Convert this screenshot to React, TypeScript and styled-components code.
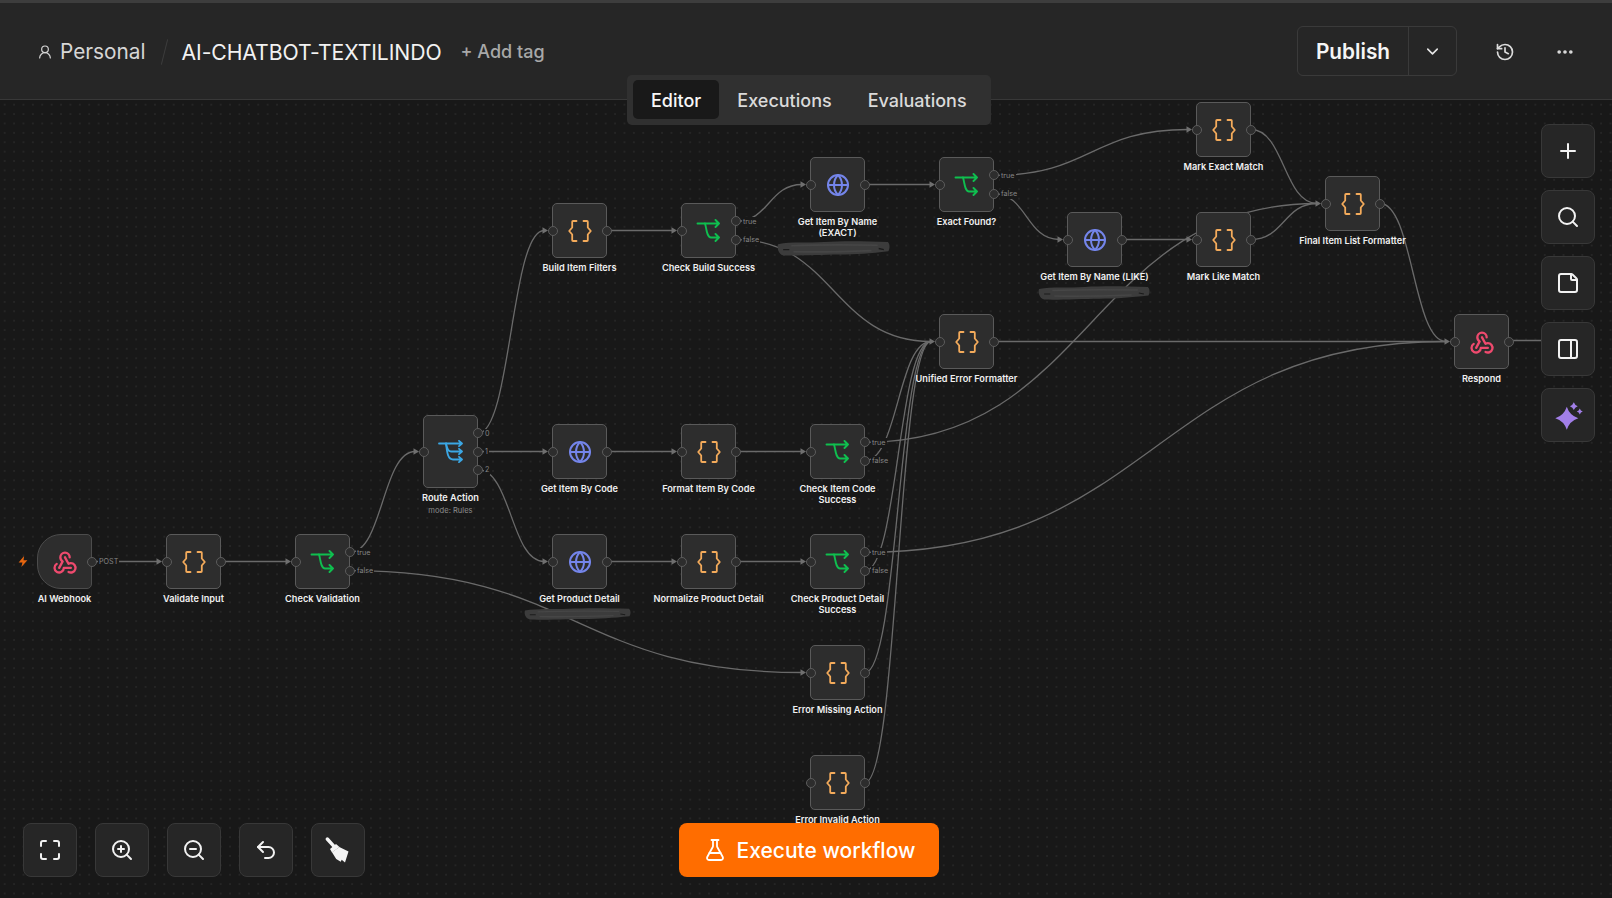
import styled, { createGlobalStyle } from 'styled-components';
import {
  ChevronDown,
  Ellipsis,
  FlaskConical,
  Globe,
  History,
  Maximize,
  PanelRight,
  Plus,
  Search,
  StickyNote,
  Undo2,
  UserRound,
  ZoomIn,
  ZoomOut,
} from 'lucide-react';
import { TbWebhook } from 'react-icons/tb';

// canvas starts under the header, node coordinates below are page coordinates
const CANVAS_TOP = 100;
const NODE_SIZE = 55;

type NodeKind = 'webhook' | 'code' | 'http' | 'if' | 'switch';

interface FlowNode {
  id: string;
  label: string[];
  sub?: string;
  x: number;
  y: number;
  h?: number;
  kind: NodeKind;
  outs?: string[];
  noInput?: boolean;
  trigger?: boolean;
}

interface FlowEdge {
  from: string;
  out?: number;
  to: string;
}

const nodes: FlowNode[] = [
  { id: 'hook', label: ['AI Webhook'], x: 37, y: 534, kind: 'webhook', outs: ['POST'], noInput: true, trigger: true },
  { id: 'validate', label: ['Validate Input'], x: 166, y: 534, kind: 'code' },
  { id: 'checkVal', label: ['Check Validation'], x: 295, y: 534, kind: 'if', outs: ['true', 'false'] },
  { id: 'route', label: ['Route Action'], sub: 'mode: Rules', x: 423, y: 415, h: 73, kind: 'switch', outs: ['0', '1', '2'] },
  { id: 'build', label: ['Build Item Filters'], x: 552, y: 203, kind: 'code' },
  { id: 'checkBuild', label: ['Check Build Success'], x: 681, y: 203, kind: 'if', outs: ['true', 'false'] },
  { id: 'exact', label: ['Get Item By Name', '(EXACT)'], x: 810, y: 157, kind: 'http' },
  { id: 'found', label: ['Exact Found?'], x: 939, y: 157, kind: 'if', outs: ['true', 'false'] },
  { id: 'like', label: ['Get Item By Name (LIKE)'], x: 1067, y: 212, kind: 'http' },
  { id: 'markExact', label: ['Mark Exact Match'], x: 1196, y: 102, kind: 'code' },
  { id: 'markLike', label: ['Mark Like Match'], x: 1196, y: 212, kind: 'code' },
  { id: 'final', label: ['Final Item List Formatter'], x: 1325, y: 176, kind: 'code' },
  { id: 'unified', label: ['Unified Error Formatter'], x: 939, y: 314, kind: 'code' },
  { id: 'respond', label: ['Respond'], x: 1454, y: 314, kind: 'webhook' },
  { id: 'byCode', label: ['Get Item By Code'], x: 552, y: 424, kind: 'http' },
  { id: 'format', label: ['Format Item By Code'], x: 681, y: 424, kind: 'code' },
  { id: 'checkItem', label: ['Check Item Code', 'Success'], x: 810, y: 424, kind: 'if', outs: ['true', 'false'] },
  { id: 'product', label: ['Get Product Detail'], x: 552, y: 534, kind: 'http' },
  { id: 'normalize', label: ['Normalize Product Detail'], x: 681, y: 534, kind: 'code' },
  { id: 'checkProduct', label: ['Check Product Detail', 'Success'], x: 810, y: 534, kind: 'if', outs: ['true', 'false'] },
  { id: 'missing', label: ['Error Missing Action'], x: 810, y: 645, kind: 'code' },
  { id: 'invalid', label: ['Error Invalid Action'], x: 810, y: 755, kind: 'code' },
];

const edges: FlowEdge[] = [
  { from: 'hook', to: 'validate' },
  { from: 'validate', to: 'checkVal' },
  { from: 'checkVal', out: 0, to: 'route' },
  { from: 'checkVal', out: 1, to: 'missing' },
  { from: 'route', out: 0, to: 'build' },
  { from: 'route', out: 1, to: 'byCode' },
  { from: 'route', out: 2, to: 'product' },
  { from: 'build', to: 'checkBuild' },
  { from: 'checkBuild', out: 0, to: 'exact' },
  { from: 'checkBuild', out: 1, to: 'unified' },
  { from: 'exact', to: 'found' },
  { from: 'found', out: 0, to: 'markExact' },
  { from: 'found', out: 1, to: 'like' },
  { from: 'like', to: 'markLike' },
  { from: 'markExact', to: 'final' },
  { from: 'markLike', to: 'final' },
  { from: 'final', to: 'respond' },
  { from: 'unified', to: 'respond' },
  { from: 'byCode', to: 'format' },
  { from: 'format', to: 'checkItem' },
  { from: 'checkItem', out: 0, to: 'final' },
  { from: 'checkItem', out: 1, to: 'unified' },
  { from: 'product', to: 'normalize' },
  { from: 'normalize', to: 'checkProduct' },
  { from: 'checkProduct', out: 0, to: 'respond' },
  { from: 'checkProduct', out: 1, to: 'unified' },
  { from: 'missing', to: 'unified' },
  { from: 'invalid', to: 'unified' },
];

const GlobalStyle = createGlobalStyle`
  html, body {
    margin: 0;
    padding: 0;
    background: #181818;
  }
  * {
    box-sizing: border-box;
  }
`;

const Shell = styled.div`
  width: 100%;
  height: 100vh;
  display: flex;
  flex-direction: column;
  font-family: Inter, 'Liberation Sans', sans-serif;
  overflow: hidden;
  border-top: 3px solid #3d3d3d;
`;

const Header = styled.header`
  height: 97px;
  flex-shrink: 0;
  display: flex;
  align-items: center;
  justify-content: space-between;
  padding: 0 35px 0 37px;
  background: #262626;
  border-bottom: 1px solid #383838;
`;

const Crumbs = styled.div`
  display: flex;
  align-items: center;
  margin-top: 1px;
`;

const Project = styled.span`
  display: flex;
  align-items: center;
  gap: 7px;
  font-size: 20.8px;
  color: #d6d6d6;
`;

const Slash = styled.span`
  width: 1px;
  height: 26px;
  margin: 0 17px 0 18px;
  background: #3d3d3d;
  transform: rotate(14deg);
`;

const WorkflowName = styled.span`
  font-size: 21.2px;
  color: #f2f2f2;
  letter-spacing: -0.1px;
`;

const AddTag = styled.span`
  margin-left: 19px;
  font-size: 18px;
  font-weight: 500;
  color: #a8a8a8;
`;

const Actions = styled.div`
  display: flex;
  align-items: center;
  margin-top: -1px;
`;

const PublishGroup = styled.div`
  display: flex;
  height: 50px;
  border: 1px solid #3a3a3a;
  border-radius: 6px;
  margin-right: 36px;
`;

const PublishButton = styled.span`
  width: 111px;
  padding-top: 2px;
  display: flex;
  align-items: center;
  justify-content: center;
  font-size: 20.8px;
  font-weight: 600;
  color: #f5f5f5;
  border-right: 1px solid #3a3a3a;
`;

const PublishCaret = styled.span`
  width: 47px;
  padding-top: 2px;
  display: flex;
  align-items: center;
  justify-content: center;
  color: #e6e6e6;
`;

const HeaderIcon = styled.span`
  width: 24px;
  padding-top: 2px;
  display: flex;
  justify-content: center;
  color: #dcdcdc;
  margin-right: 36px;
  &:last-child {
    margin-right: 0;
  }
`;

const Canvas = styled.main`
  position: relative;
  flex: 1;
  background-color: #181818;
  background-image: radial-gradient(circle, #252525 0.7px, transparent 0.9px);
  background-size: 9.4px 9.4px;
`;

const Tabs = styled.nav`
  position: absolute;
  z-index: 5;
  top: -25px;
  left: 627px;
  width: 364px;
  height: 50px;
  padding: 5px 6px;
  display: flex;
  gap: 0;
  background: #303030;
  border-radius: 5px;
`;

const Tab = styled.span<{ $active?: boolean }>`
  height: 39px;
  padding: 2px 18px 0;
  display: flex;
  align-items: center;
  font-size: 18px;
  font-weight: 500;
  border-radius: 5px;
  color: ${(props) => (props.$active ? '#f7f7f7' : '#dadada')};
  background: ${(props) => (props.$active ? '#191919' : 'transparent')};
`;

const EdgeLayer = styled.svg`
  position: absolute;
  left: 0;
  top: 0;
  width: 100%;
  height: 100%;
  overflow: visible;
  pointer-events: none;
`;

const NodeWrap = styled.div<{ $x: number; $y: number }>`
  position: absolute;
  left: ${(props) => props.$x - 37.5}px;
  top: ${(props) => props.$y - CANVAS_TOP}px;
  width: 130px;
  display: flex;
  flex-direction: column;
  align-items: center;
`;

const NodeBox = styled.div<{ $h: number; $trigger?: boolean }>`
  position: relative;
  width: ${NODE_SIZE}px;
  height: ${(props) => props.$h}px;
  display: flex;
  align-items: center;
  justify-content: center;
  background: #2d2d2d;
  border: 1px solid ${(props) => (props.$trigger ? '#4c4c4c' : '#5a5a5a')};
  border-radius: ${(props) => (props.$trigger ? '24px 5px 5px 24px' : '5px')};
`;

const Port = styled.span<{ $side: 'left' | 'right'; $offset: number }>`
  position: absolute;
  ${(props) => props.$side}: -5.5px;
  top: calc(50% + ${(props) => props.$offset}px - 5px);
  width: 10px;
  height: 10px;
  border-radius: 50%;
  background: #2d2d2d;
  border: 1px solid #5c5c5c;
`;

const PortLabel = styled.span<{ $offset: number }>`
  position: absolute;
  left: 60px;
  top: calc(50% + ${(props) => props.$offset}px - 4.5px);
  height: 10px;
  line-height: 10px;
  padding: 0 1px;
  font-size: 7.2px;
  color: #858585;
  background: #181818;
`;

const NodeLabel = styled.div`
  margin-top: 4px;
  width: 130px;
  text-align: center;
  font-size: 9.2px;
  line-height: 11px;
  font-weight: 600;
  color: #f0f0f0;
`;

const NodeSub = styled.div`
  margin-top: 3px;
  font-size: 7.6px;
  line-height: 10px;
  color: #8b8b8b;
`;

const TriggerMark = styled.svg`
  position: absolute;
  left: -20px;
  top: 50%;
  margin-top: -5.5px;
  width: 10px;
  height: 11px;
`;

const Redaction = styled.svg<{ $x: number; $y: number; $w: number; $h: number }>`
  position: absolute;
  left: ${(props) => props.$x}px;
  top: ${(props) => props.$y - CANVAS_TOP}px;
  width: ${(props) => props.$w}px;
  height: ${(props) => props.$h}px;
`;

const ToolRow = styled.div`
  position: absolute;
  z-index: 5;
  left: 23px;
  bottom: 21px;
  display: flex;
  gap: 18px;
`;

const ToolColumn = styled.div`
  position: absolute;
  z-index: 5;
  left: 1541px;
  top: 24px;
  display: flex;
  flex-direction: column;
  gap: 12px;
`;

const ToolButton = styled.button`
  width: 54px;
  height: 54px;
  padding: 0;
  display: flex;
  align-items: center;
  justify-content: center;
  color: #f2f2f2;
  background: #262626;
  border: 1.5px solid #383838;
  border-radius: 8px;
`;

const ExecuteButton = styled.button`
  position: absolute;
  z-index: 5;
  left: 679px;
  bottom: 21px;
  width: 260px;
  height: 54px;
  display: flex;
  align-items: center;
  justify-content: center;
  gap: 10px;
  font-family: inherit;
  font-size: 21px;
  font-weight: 500;
  color: #fff;
  background: #ff6d00;
  border: none;
  border-radius: 8px;
`;

const portOffset = (index: number, count: number) =>
  count <= 1 ? 0 : (index - (count - 1) / 2) * 18.2;

const centerY = (node: FlowNode) => node.y + (node.h ?? NODE_SIZE) / 2 - CANVAS_TOP;

const nodeById = (id: string) => nodes.find((n) => n.id === id) as FlowNode;

const edgePath = (edge: FlowEdge) => {
  const a = nodeById(edge.from);
  const b = nodeById(edge.to);
  const x0 = a.x + NODE_SIZE;
  const y0 = centerY(a) + portOffset(edge.out ?? 0, a.outs?.length ?? 1);
  const x1 = b.x - 8;
  const y1 = centerY(b);
  const mid = (x1 - x0) / 2;
  return `M${x0} ${y0}C${x0 + mid} ${y0} ${x1 - mid} ${y1} ${x1} ${y1}`;
};

const BracesIcon = () => (
  <svg width="24" height="22" viewBox="0 0 24 22" fill="none" stroke="#f4ab5b" strokeWidth="1.8" strokeLinecap="round" strokeLinejoin="round">
    <path d="M8.5 1H5c-.5 0-.8.3-.8.8V7.5L1.2 11l3 3.5v5.7c0 .5.3.8.8.8h3.5" />
    <path d="M15.5 1H19c.5 0 .8.3.8.8V7.5l3 3.5-3 3.5v5.7c0 .5-.3.8-.8.8h-3.5" />
  </svg>
);

const IfIcon = () => (
  <svg width="25" height="23" viewBox="0 0 25 23" fill="none" stroke="#0fbf4f" strokeWidth="1.9" strokeLinecap="round" strokeLinejoin="round">
    <path d="M1.5 4.5H23M19.5 1l3.5 3.5L19.5 8" />
    <path d="M9 4.5c1.500 4 1.500 14 6 14h8M19.5 15l3.500 3.500-3.500 3.500" />
  </svg>
);

const SwitchIcon = () => (
  <svg width="25" height="23" viewBox="0 0 25 23" fill="none" stroke="#3ba7e4" strokeWidth="1.8" strokeLinecap="round" strokeLinejoin="round">
    <path d="M1 3.5H24M21 .8l3 2.700-3 2.700" />
    <path d="M8 3.5c1 4 1.500 8 5 8h11M21 8.800l3 2.700-3 2.700" />
    <path d="M8 3.5c1 8 1.500 16 7 16h9M21 16.800l3 2.700-3 2.700" />
  </svg>
);

const NodeIcon = ({ kind }: { kind: NodeKind }) => {
  if (kind === 'webhook') return <TbWebhook size={28} color="#ef4a6e" />;
  if (kind === 'code') return <BracesIcon />;
  if (kind === 'http') return <Globe size={24} color="#7485ea" strokeWidth={2} />;
  if (kind === 'if') return <IfIcon />;
  return <SwitchIcon />;
};

const Sparkle = () => (
  <svg width="29" height="29" viewBox="0 0 29 29" fill="#a27fe8">
    <path d="M12.8 5.7Q15.600 14.400 24.300 17.200 15.600 20 12.800 28.700 10 20 1.300 17.200 10 14.400 12.800 5.700z" />
    <path d="M19.800 1.300Q20.800 4.200 23.700 5.200 20.800 6.200 19.800 9.100 18.800 6.200 15.900 5.200 18.800 4.200 19.800 1.300z" />
    <path d="M25.800 7.500Q26.500 9.800 28.800 10.500 26.500 11.200 25.800 13.500 25.100 11.200 22.800 10.500 25.100 9.800 25.800 7.500z" />
  </svg>
);

const BroomIcon = () => (
  <svg width="28" height="28" viewBox="0 0 28 28" fill="#f4f4f4">
    <path d="M3.300 3L10 10.300" stroke="#f4f4f4" strokeWidth="3.400" strokeLinecap="round" />
    <path d="M6 13L12 8L15.500 11L8 16.500z" />
    <path d="M8 16.300L15.300 11L24.500 15.500L21 26.500L17.700 23.700L16.700 25.700L12.200 23z" />
  </svg>
);

const Scribble = ({ x, y, w, h }: { x: number; y: number; w: number; h: number }) => (
  <Redaction $x={x} $y={y} $w={w} $h={h} viewBox="0 0 110 14" preserveAspectRatio="none">
    <path
      d="M1 3C14 .5 30 2 46 1S86 .2 108 1c2 2 2 6 .5 8.500-18 2-30 3-48 3.200S20 14 6 13.500C1 12 0 6 1 3z"
      fill="#3c3c3c"
    />
    <path d="M6 8h6M99 7l5 1" stroke="#1b1b1b" strokeWidth="1.200" fill="none" />
    <path d="M14 4.500c24-1 56-1 84-.5M16 10c24 .5 50 0 76-1" stroke="#464646" strokeWidth="1.500" fill="none" />
  </Redaction>
);

const App = () => {
  return (
    <>
      <GlobalStyle />
      <Shell>
        <Header>
          <Crumbs>
            <Project>
              <UserRound size={16} strokeWidth={1.8} />
              Personal
            </Project>
            <Slash />
            <WorkflowName>AI-CHATBOT-TEXTILINDO</WorkflowName>
            <AddTag>+ Add tag</AddTag>
          </Crumbs>
          <Actions>
            <PublishGroup>
              <PublishButton>Publish</PublishButton>
              <PublishCaret>
                <ChevronDown size={19} strokeWidth={2} />
              </PublishCaret>
            </PublishGroup>
            <HeaderIcon>
              <History size={20} strokeWidth={2} />
            </HeaderIcon>
            <HeaderIcon>
              <Ellipsis size={20} strokeWidth={2.4} />
            </HeaderIcon>
          </Actions>
        </Header>
        <Canvas>
          <Tabs>
            <Tab $active>Editor</Tab>
            <Tab>Executions</Tab>
            <Tab>Evaluations</Tab>
          </Tabs>

          <EdgeLayer>
            <path d="M1509 240.500H1560" stroke="#6a6a6a" strokeWidth="1.300" fill="none" />
            {edges.map((edge) => (
              <path
                key={`${edge.from}-${edge.out ?? 0}-${edge.to}`}
                d={edgePath(edge)}
                stroke="#6a6a6a"
                strokeWidth="1.300"
                fill="none"
              />
            ))}
            {nodes
              .filter((n) => edges.some((e) => e.to === n.id))
              .map((n) => (
                <polygon
                  key={n.id}
                  points={`${n.x - 9.5},${centerY(n) - 3.2} ${n.x - 4},${centerY(n)} ${n.x - 9.5},${centerY(n) + 3.2}`}
                  fill="#6f6f6f"
                />
              ))}
          </EdgeLayer>

          <Scribble x={777} y={241} w={113} h={15} />
          <Scribble x={1038} y={286} w={112} h={14} />
          <Scribble x={524} y={608} w={107} h={12} />

          {nodes.map((node) => (
            <NodeWrap key={node.id} $x={node.x} $y={node.y}>
              <NodeBox $h={node.h ?? NODE_SIZE} $trigger={node.trigger}>
                {node.trigger && (
                  <TriggerMark viewBox="0 0 9 10">
                    <path d="M5.500 0L0.500 5.800H4L3 10L8.500 3.800H5z" fill="#e8660f" />
                  </TriggerMark>
                )}
                <NodeIcon kind={node.kind} />
                {!node.noInput && <Port $side="left" $offset={0} />}
                {(node.outs ?? ['']).map((name, i, list) => (
                  <Port key={`p${i}`} $side="right" $offset={portOffset(i, list.length)} />
                ))}
                {(node.outs ?? []).map((name, i, list) => (
                  <PortLabel key={name} $offset={portOffset(i, list.length)}>
                    {name}
                  </PortLabel>
                ))}
              </NodeBox>
              <NodeLabel>
                {node.label.map((line) => (
                  <div key={line}>{line}</div>
                ))}
              </NodeLabel>
              {node.sub && <NodeSub>{node.sub}</NodeSub>}
            </NodeWrap>
          ))}

          <ToolRow>
            <ToolButton>
              <Maximize size={24} strokeWidth={2} />
            </ToolButton>
            <ToolButton>
              <ZoomIn size={24} strokeWidth={2} />
            </ToolButton>
            <ToolButton>
              <ZoomOut size={24} strokeWidth={2} />
            </ToolButton>
            <ToolButton>
              <Undo2 size={24} strokeWidth={2} />
            </ToolButton>
            <ToolButton>
              <BroomIcon />
            </ToolButton>
          </ToolRow>

          <ToolColumn>
            <ToolButton>
              <Plus size={24} strokeWidth={2} />
            </ToolButton>
            <ToolButton>
              <Search size={24} strokeWidth={2} />
            </ToolButton>
            <ToolButton>
              <StickyNote size={24} strokeWidth={2} />
            </ToolButton>
            <ToolButton>
              <PanelRight size={24} strokeWidth={2} />
            </ToolButton>
            <ToolButton>
              <Sparkle />
            </ToolButton>
          </ToolColumn>

          <ExecuteButton>
            <FlaskConical size={24} strokeWidth={1.8} />
            Execute workflow
          </ExecuteButton>
        </Canvas>
      </Shell>
    </>
  );
};

export default App;
